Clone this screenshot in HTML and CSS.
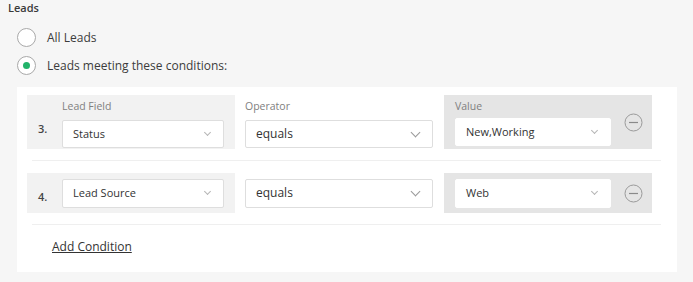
FILE: index.html
```html
<!DOCTYPE html>
<html lang="en">
<head>
    <meta charset="UTF-8">
    <title>Smart List - Leads</title>
    <link rel="stylesheet" href="styles.css">
</head>
<body>
    <div class="section-title">Leads</div>

    <div class="radio-list">
        <label class="radio-row">
            <span class="radio"></span>
            All Leads
        </label>
        <label class="radio-row">
            <span class="radio checked"></span>
            Leads meeting these conditions:
        </label>
    </div>

    <div class="conditions-panel">
        <!-- condition 3 -->
        <div class="condition">
            <div class="rule">
                <div class="cell cell-field">
                    <span class="rule-number">3.</span>
                    <div class="field-box">
                        <span class="field-label">Lead Field</span>
                        <div class="select select-field">Status <span class="chevron small"></span></div>
                    </div>
                </div>
                <div class="cell cell-operator">
                    <div class="field-box">
                        <span class="field-label">Operator</span>
                        <div class="select select-operator">equals <span class="chevron"></span></div>
                    </div>
                </div>
                <div class="cell cell-value">
                    <div class="field-box">
                        <span class="field-label">Value</span>
                        <div class="select select-value">New,Working <span class="chevron small"></span></div>
                    </div>
                    <svg class="remove-btn" width="19" height="19" viewBox="0 0 19 19">
                        <circle cx="9.5" cy="9.5" r="8.5" fill="none" stroke="#9a9a9a" stroke-width="1"/>
                        <line x1="5" y1="9.5" x2="14" y2="9.5" stroke="#8a8a8a" stroke-width="1.2"/>
                    </svg>
                </div>
            </div>
        </div>

        <!-- condition 4 -->
        <div class="condition">
            <div class="rule rule-compact">
                <div class="cell cell-field">
                    <span class="rule-number">4.</span>
                    <div class="select select-field">Lead Source <span class="chevron small"></span></div>
                </div>
                <div class="cell cell-operator">
                    <div class="select select-operator">equals <span class="chevron"></span></div>
                </div>
                <div class="cell cell-value">
                    <div class="select select-value">Web <span class="chevron small"></span></div>
                    <svg class="remove-btn" width="19" height="19" viewBox="0 0 19 19">
                        <circle cx="9.5" cy="9.5" r="8.5" fill="none" stroke="#9a9a9a" stroke-width="1"/>
                        <line x1="5" y1="9.5" x2="14" y2="9.5" stroke="#8a8a8a" stroke-width="1.2"/>
                    </svg>
                </div>
            </div>
        </div>

        <div class="add-row">
            <a href="#" class="add-link">Add Condition</a>
        </div>
    </div>
</body>
</html>
```

FILE: styles.css
```css
body {
    margin: 0;
    font-family: "Open Sans", "Liberation Sans", sans-serif;
    font-size: 12px;
    color: #333333;
    background-color: #f6f6f6;
}
.section-title {
    padding-left: 8px;
    font-size: 11px;
    font-weight: 600;
    line-height: 16px;
    color: #3a3a3a;
}
.radio-list {
    margin-top: 7px;
    padding-left: 17px;
}
.radio-row {
    display: flex;
    align-items: center;
    gap: 11px;
    height: 28px;
    color: #3c3c3c;
}
.radio {
    width: 17px;
    height: 17px;
    border: 1px solid #a9a9a9;
    border-radius: 50%;
    background: #ffffff;
    display: flex;
    align-items: center;
    justify-content: center;
}
.radio.checked::after {
    content: "";
    width: 7px;
    height: 7px;
    border-radius: 50%;
    background: #22b36a;
}
.conditions-panel {
    margin: 8px 0 0 17px;
    width: 660px;
    background: #ffffff;
}
.condition {
    margin-left: 15px;
    width: 629px;
    padding: 12px 0 11px;
    border-bottom: 1px solid #efefef;
}
.condition:first-child {
    padding-top: 8px;
}
.rule {
    display: flex;
    margin-left: -5px;
    height: 54px;
}
.rule-compact {
    height: 40px;
}
.cell {
    display: flex;
    align-items: center;
    box-sizing: border-box;
}
.cell-field {
    width: 208px;
    padding-left: 11px;
    background: #f2f2f2;
}
.cell-operator {
    width: 209px;
    padding-left: 10px;
}
.cell-value {
    width: 208px;
    padding-left: 11px;
    background: #e5e5e5;
}
.rule-number {
    width: 24px;
    align-self: flex-end;
    padding-bottom: 13px;
    font-size: 11px;
    font-weight: 600;
    color: #444;
}
.rule-compact .rule-number {
    padding-bottom: 9px;
}
.field-box {
    display: flex;
    flex-direction: column;
    padding-top: 3px;
}
.field-label {
    font-size: 10.5px;
    line-height: 15px;
    color: #808080;
    margin-bottom: 6px;
}
.cell-value .field-label {
    margin-bottom: 4px;
}
.select {
    position: relative;
    box-sizing: border-box;
    height: 28px;
    line-height: 26px;
    padding-left: 10px;
    font-size: 11px;
    background: #ffffff;
    border: 1px solid #dedede;
    border-radius: 2px;
    color: #333;
}
.rule-compact .select {
    height: 29px;
}
.select-field {
    width: 162px;
}
.select-operator {
    width: 188px;
    font-size: 12px;
}
.select-value {
    width: 156px;
    border-color: #ffffff;
    margin-bottom: 2px;
}
.rule-compact .select-value {
    margin-bottom: 0;
}
.chevron {
    position: absolute;
    right: 13px;
    top: 8px;
    width: 6px;
    height: 6px;
    border-right: 1px solid #9a9a9a;
    border-bottom: 1px solid #9a9a9a;
    transform: rotate(45deg);
}
.chevron.small {
    right: 13px;
    top: 9px;
    width: 4px;
    height: 4px;
    border-color: #b5b5b5;
}
.remove-btn {
    margin-left: 13px;
}
.add-row {
    padding: 13px 0 16px 35px;
    line-height: 18px;
}
.add-link {
    color: #333;
    text-decoration: underline;
}
```
